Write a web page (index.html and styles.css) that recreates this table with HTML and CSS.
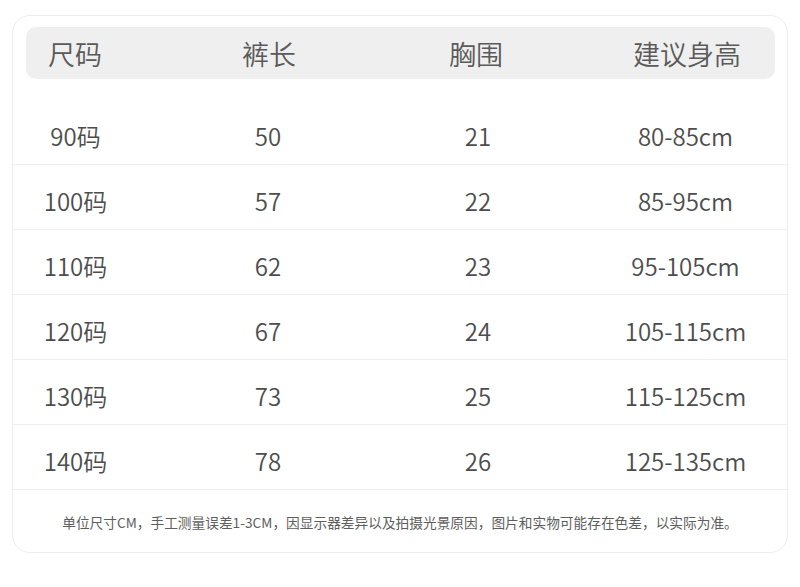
FILE: index.html
```html
<!DOCTYPE html>
<html lang="zh">
<head>
<meta charset="utf-8">
<link rel="stylesheet" href="styles.css">
</head>
<body>
<div class="card">
  <div class="head">
    <div class="c1">尺码</div>
    <div class="c2">裤长</div>
    <div class="c3">胸围</div>
    <div class="c4">建议身高</div>
  </div>
  <div class="rows">
    <div class="row"><div>90码</div><div>50</div><div>21</div><div class="d4">80-85cm</div></div>
    <div class="row"><div>100码</div><div>57</div><div>22</div><div class="d4">85-95cm</div></div>
    <div class="row"><div>110码</div><div>62</div><div>23</div><div class="d4">95-105cm</div></div>
    <div class="row"><div>120码</div><div>67</div><div>24</div><div class="d4">105-115cm</div></div>
    <div class="row"><div>130码</div><div>73</div><div>25</div><div class="d4">115-125cm</div></div>
    <div class="row"><div>140码</div><div>78</div><div>26</div><div class="d4">125-135cm</div></div>
  </div>
  <div class="note">单位尺寸CM，手工测量误差1-3CM，因显示器差异以及拍摄光景原因，图片和实物可能存在色差，以实际为准。</div>
</div>
</body>
</html>
```
FILE: styles.css
```css
html, body {
  margin: 0;
  padding: 0;
  background: #ffffff;
}
body {
  font-family: "Noto Sans CJK SC", "Noto Sans", sans-serif;
  color: #555555;
}
.card {
  margin: 15px 12px 0 12px;
  height: 538px;
  box-sizing: border-box;
  border: 1px solid #ececec;
  border-radius: 18px;
  padding-top: 11px;
}
.head {
  margin: 0 12px 0 13px;
  height: 52px;
  background: #efefef;
  border-radius: 10px;
  display: grid;
  grid-template-columns: 98px 290px 124px 1fr;
  align-items: center;
  font-size: 27px;
  font-weight: 350;
  color: #5a5a5a;
  text-align: center;
  line-height: 1;
}
.head .c4 {
  padding-left: 61px;
}
.rows {
  margin-top: 21px;
}
.row {
  display: grid;
  grid-template-columns: 125px 260px 160px 1fr;
  height: 65px;
  box-sizing: border-box;
  border-bottom: 1px solid #efefef;
  align-items: center;
  text-align: center;
  font-size: 24px;
  font-weight: 350;
  line-height: 1;
  padding-top: 7px;
  color: #4d4d4d;
}
.row .d4 {
  padding-left: 26px;
}
.note {
  text-align: center;
  font-size: 13.7px;
  font-weight: 400;
  color: #5e5e5e;
  padding-top: 24px;
  line-height: 1.3;
}
```
